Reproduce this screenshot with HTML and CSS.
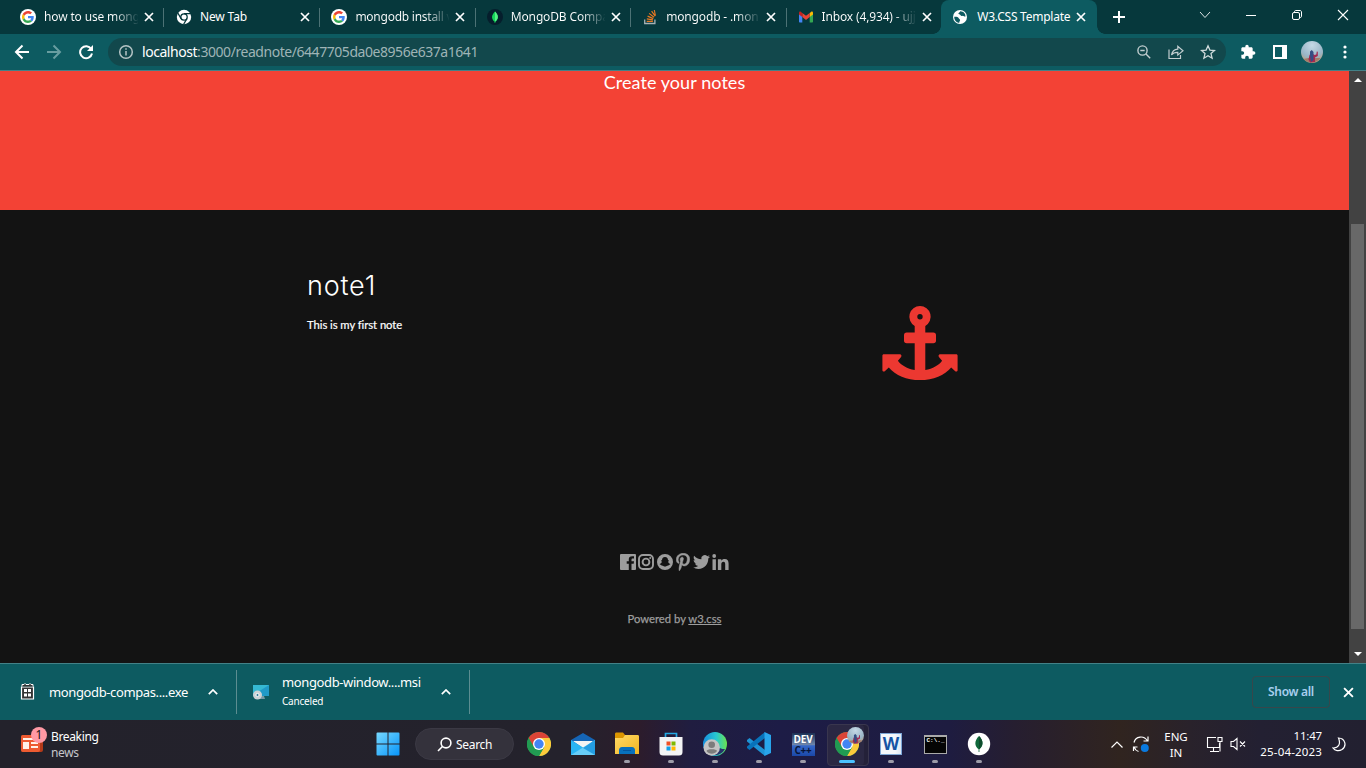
FILE: index.html
```html
<!DOCTYPE html>
<html lang="en">
<head>
<meta charset="utf-8">
<title>W3.CSS Template</title>
<link rel="stylesheet" href="styles.css">
</head>
<body>
<svg class="defs" width="0" height="0" aria-hidden="true">
  <defs>
    <symbol id="google" viewBox="0 0 48 48"><circle cx="24" cy="24" r="24" fill="#fff"/><g transform="translate(6 6) scale(.75)"><path fill="#EA4335" d="M24 9.5c3.54 0 6.71 1.22 9.21 3.6l6.85-6.85C35.9 2.38 30.47 0 24 0 14.62 0 6.51 5.38 2.56 13.22l7.98 6.19C12.43 13.72 17.74 9.5 24 9.5z"/><path fill="#4285F4" d="M46.98 24.55c0-1.57-.15-3.09-.38-4.55H24v9.02h12.94c-.58 2.96-2.26 5.48-4.78 7.18l7.73 6c4.51-4.18 7.09-10.36 7.09-17.65z"/><path fill="#FBBC05" d="M10.53 28.59c-.48-1.45-.76-2.99-.76-4.59s.27-3.14.76-4.59l-7.98-6.19C.92 16.46 0 20.12 0 24c0 3.88.92 7.54 2.56 10.78l7.97-6.19z"/><path fill="#34A853" d="M24 48c6.48 0 11.93-2.13 15.89-5.81l-7.73-6c-2.15 1.45-4.92 2.3-8.16 2.3-6.26 0-11.57-4.22-13.47-9.91l-7.98 6.19C6.51 42.62 14.62 48 24 48z"/></g></symbol>
    <symbol id="close" viewBox="0 0 10 10"><path d="M1 1l8 8M9 1L1 9" stroke="#fff" stroke-width="1.7"/></symbol>
    <symbol id="chrome" viewBox="0 0 24 24"><circle cx="12" cy="12" r="12" fill="#34a853"/><path d="M12 12L1.6 6A12 12 0 0 1 22.4 6z" fill="#db4437"/><path d="M12 6h10.4A12 12 0 0 1 12 24l5.2-9z" fill="#fdcb3b"/><path d="M1.6 6L6.8 15 12 12V6z" fill="#db4437"/><path d="M1.6 6A12 12 0 0 0 12 24l5.2-9-5.2 3-5.2-3z" fill="#219b52"/><circle cx="12" cy="12" r="6" fill="#fff"/><circle cx="12" cy="12" r="4.7" fill="#4285f4"/></symbol>
    <symbol id="up" viewBox="0 0 10 6"><path d="M.8 5.2L5 1l4.2 4.2" fill="none" stroke="#fff" stroke-width="1.7"/></symbol>
    <radialGradient id="sky" cx=".5" cy=".2" r=".9"><stop offset="0" stop-color="#c5d9e6"/><stop offset=".6" stop-color="#99b5c6"/><stop offset="1" stop-color="#c9985f"/></radialGradient>
    <symbol id="avatar" viewBox="0 0 22 22"><circle cx="11" cy="11" r="11" fill="url(#sky)"/><path d="M2.500 18l5-1h12a11 11 0 0 1-17 1z" fill="#a47b69"/><path d="M8.500 14l2-2 3 2 1.800-.500.500-3 1 .300v4.200l-2.800 1.500v4.500l-5 .500-1.500-3z" fill="#a52950"/><path d="M9 10.500l1.800-1.500 1.700 2v8l-2.500 2-1-6z" fill="#354e83"/></symbol>
    <linearGradient id="blue" x1="0" y1="0" x2="1" y2="1"><stop offset="0" stop-color="#77d9ff"/><stop offset="1" stop-color="#0794f9"/></linearGradient>
    <linearGradient id="gold" x1="0" y1="0" x2="1" y2="1"><stop offset="0" stop-color="#ffda67"/><stop offset="1" stop-color="#f3b520"/></linearGradient>
    <linearGradient id="edge" x1="0" y1="0" x2="1" y2="0"><stop offset="0" stop-color="#168ddd"/><stop offset=".55" stop-color="#28c8d2"/><stop offset="1" stop-color="#6ae34f"/></linearGradient>
  </defs>
</svg>

<header class="tabstrip">
  <div class="tab"><svg class="favicon"><use href="#google"/></svg><span class="tab-title fade">how to use mong</span><svg class="x"><use href="#close"/></svg></div>
  <div class="tab"><svg class="favicon" viewBox="0 0 16 16"><circle cx="8" cy="8" r="7.200" fill="#fff"/><circle cx="8" cy="8" r="3.200" fill="#fff" stroke="#06383c" stroke-width="1.300"/><path d="M8 4.700h7M5.100 9.700L1.800 4M10.900 9.700L7.500 15.500" stroke="#06383c" stroke-width="1.300"/></svg><span class="tab-title">New Tab</span><svg class="x"><use href="#close"/></svg></div>
  <div class="tab"><svg class="favicon"><use href="#google"/></svg><span class="tab-title fade wide">mongodb install v</span><svg class="x"><use href="#close"/></svg></div>
  <div class="tab"><svg class="favicon" viewBox="0 0 16 16"><circle cx="8" cy="8" r="8" fill="#061e2c"/><path d="M8 2.500c4 4 3.700 7.500.3 10.200V14h-.7v-1.300C4.300 10 4 6.500 8 2.500z" fill="#13d45a"/><path d="M8 2.500v10.200c3.500-2.700 4-6 0-10.200z" fill="#55ef83"/></svg><span class="tab-title fade">MongoDB Compa</span><svg class="x"><use href="#close"/></svg></div>
  <div class="tab"><svg class="favicon" viewBox="0 0 16 16" fill="none"><path d="M2.700 10.500v4h10.200v-4" stroke="#a5b1b5" stroke-width="1.300"/><path d="M4.700 12.300h6.200M4.800 9.900l6.100 1M5.600 7.100l5.700 2.500M7.100 4.400l4.900 3.900M9.600 2.200l3.600 5M12.300 1l1.100 5.500" stroke="#e87922" stroke-width="1.150"/></svg><span class="tab-title fade">mongodb - .mon</span><svg class="x"><use href="#close"/></svg></div>
  <div class="tab"><svg class="favicon" viewBox="0 0 16 16"><path d="M1 4v8.500c0 .6.400 1 1 1h2.300V7z" fill="#4285f4"/><path d="M15 4v8.500c0 .6-.4 1-1 1h-2.300V7z" fill="#34a853"/><path d="M11.700 4L13 2.900c.9-.7 2-.1 2 1v1.700l-3.300 2.500z" fill="#fbbc04"/><path d="M4.300 4L8 6.800 11.700 4v4.100L8 10.900 4.300 8.100z" fill="#ea4335"/><path d="M1 5.600V3.900c0-1.100 1.100-1.700 2-1L4.300 4v4.100z" fill="#c5221f"/></svg><span class="tab-title fade">Inbox (4,934) - ujj</span><svg class="x"><use href="#close"/></svg></div>
  <div class="tab active"><svg class="favicon" viewBox="0 0 16 16"><circle cx="8" cy="8" r="7" fill="#fff"/><path d="M2.300 7.700c1.800-.2 4 .2 4.400 1.500.4 1.100 1.700.8 1.400 2.100-.1.800-.9 1.200-.8 2.500C4.500 13.500 2 11 2.300 7.700zM8.200 2.200c-.2 1.100-1.700 1.200-1.800 2.300 0 1.100 1.500.6 2 1.500.3.800 1.100 1.100 2 .9 1.200-.3 1.600.8 2.900.8.800-2.600-1.800-5.600-5.100-5.500z" fill="#0d5b61"/></svg><span class="tab-title">W3.CSS Template</span><svg class="x"><use href="#close"/></svg></div>
  <svg class="newtab" viewBox="0 0 12 12"><path d="M6 0v12M0 6h12" stroke="#fff" stroke-width="2"/></svg>
  <div class="window-controls">
    <svg viewBox="0 0 12 12"><path d="M1 3l5 5.500L11 3" fill="none" stroke="#dce5e6"/></svg>
    <svg viewBox="0 0 12 12"><path d="M1 6.500h10" stroke="#fff"/></svg>
    <svg viewBox="0 0 12 12" fill="none" stroke="#fff"><rect x="1.500" y="3.500" width="7" height="7" rx="1.500"/><path d="M3.500 3.200V2.700c0-.7.500-1.200 1.200-1.200H9c.8 0 1.500.7 1.500 1.500v4.300c0 .7-.5 1.200-1.200 1.200h-.6"/></svg>
    <svg viewBox="0 0 12 12"><path d="M1 1l10 10M11 1L1 11" stroke="#fff" stroke-width="1.100"/></svg>
  </div>
</header>

<nav class="toolbar">
  <svg class="nav-icon" viewBox="0 0 16 16" fill="none" stroke="#fff" stroke-width="2"><path d="M15 8H2.500M8.500 1.500L2 8l6.500 6.500"/></svg>
  <svg class="nav-icon" viewBox="0 0 16 16" fill="none" stroke="#689da0" stroke-width="2"><path d="M1 8h12.500M7.500 1.500L14 8l-6.500 6.500"/></svg>
  <svg class="nav-icon" viewBox="0 0 16 16" fill="none" stroke="#fff" stroke-width="2"><path d="M13.200 5A6 6 0 1 0 14 9.500"/><path d="M15 1v6H9z" fill="#fff" stroke="none"/></svg>
  <div class="omnibox">
    <svg class="info" viewBox="0 0 16 16" fill="none" stroke="#b5c4c5" stroke-width="1.500"><circle cx="8" cy="8" r="6.300"/><path d="M8 7v4.500M8 4.200v1.600"/></svg>
    <span class="url"><b>localhost</b>:3000/readnote/6447705da0e8956e637a1641</span>
    <svg class="omni-icon" viewBox="0 0 16 16" fill="none" stroke="#c2ced0" stroke-width="1.400"><circle cx="6.500" cy="6.500" r="4.600"/><path d="M10 10l4.200 4.200M4.300 6.500h4.400"/></svg>
    <svg class="omni-icon" viewBox="0 0 16 16" fill="none" stroke="#c2ced0" stroke-width="1.200"><path d="M1 5.500v9h11.500V11M3.500 11c.7-4 3-5.700 6.300-5.900V2.300L15 6.800l-5.200 4.300V8.400C7 8.300 5 9 3.500 11z"/></svg>
    <svg class="omni-icon" viewBox="0 0 16 16" fill="none" stroke="#d0dbdc" stroke-width="1.300"><path d="M8 1.800l1.900 4.300 4.600.4L11 9.600l1.100 4.600L8 11.700l-4.100 2.500L5 9.600 1.500 6.500l4.600-.4z"/></svg>
  </div>
  <svg class="ext" viewBox="0 0 24 24"><path fill="#fff" d="M20.500 11H19V7c0-1.100-.9-2-2-2h-4V3.500C13 2.120 11.880 1 10.500 1S8 2.120 8 3.500V5H4c-1.100 0-1.990.9-1.990 2v3.800H3.500c1.490 0 2.700 1.210 2.700 2.700s-1.210 2.700-2.700 2.700H2V20c0 1.100.9 2 2 2h3.800v-1.500c0-1.490 1.210-2.700 2.700-2.700 1.490 0 2.700 1.210 2.700 2.700V22H17c1.100 0 2-.9 2-2v-4h1.500c1.380 0 2.500-1.120 2.500-2.500S21.880 11 20.500 11z"/></svg>
  <svg class="panel" viewBox="0 0 14 14"><path fill="#fff" fill-rule="evenodd" d="M0 0h14v14H0zM2 2v10h7V2z"/></svg>
  <svg class="avatar"><use href="#avatar"/></svg>
  <svg class="dots" viewBox="0 0 4 14" fill="#fff"><circle cx="2" cy="2" r="1.600"/><circle cx="2" cy="7" r="1.600"/><circle cx="2" cy="12" r="1.600"/></svg>
</nav>

<div class="viewport">
  <main class="page">
    <section class="hero"><p>Create your notes</p></section>
    <section class="note">
      <article>
        <h1>note1</h1>
        <p>This is my first note</p>
      </article>
      <svg class="anchor" viewBox="0 0 76 76"><path fill="#ec3831" fill-rule="evenodd" d="M38 1a10.700 10.700 0 0 1 5.300 20v6.500h8a2.700 2.700 0 0 1 2.700 2.700v5.400a2.700 2.700 0 0 1-2.700 2.700h-8V65c7.500-1.200 13.500-4.700 16.800-9.200l-3-3.500c-1.100-1.300-.5-3 1-3h16.100c.8 0 1.400.6 1.400 1.400v14.500c0 1.300-1.500 1.800-2.400 1l-4-3.800C62.500 70.200 51.500 75 38 75S13.500 70.200 6.800 62.400l-4 3.800c-.9.800-2.400.3-2.400-1V50.700c0-.8.6-1.400 1.400-1.400h16.100c1.500 0 2.100 1.700 1 3l-3 3.500C19.200 60.300 25.200 63.800 32.700 65V38.300h-8a2.700 2.700 0 0 1-2.700-2.700v-5.400a2.700 2.700 0 0 1 2.700-2.700h8V21A10.700 10.700 0 0 1 38 1zm0 8a2.700 2.700 0 1 0 0 5.400A2.700 2.700 0 0 0 38 9z"/></svg>
    </section>
    <footer class="footer">
      <div class="social">
        <svg width="16" height="18" viewBox="0 0 16 18"><path fill-rule="evenodd" d="M1 1h14a1 1 0 0 1 1 1v14a1 1 0 0 1-1 1h-3.500v-6.200h2.200l.3-2.500h-2.500V6.800c0-.8.300-1.200 1.300-1.200H14V3.300c-3.700-.6-5.200.6-5.200 3v2H6.700v2.500h2.100V17H1a1 1 0 0 1-1-1V2a1 1 0 0 1 1-1z"/></svg>
        <svg width="16" height="18" viewBox="0 0 16 18"><rect x="1" y="2" width="14" height="14" rx="4" fill="none" stroke="#9d9d9d" stroke-width="1.900"/><circle cx="8" cy="9" r="3.400" fill="none" stroke="#9d9d9d" stroke-width="1.900"/><circle cx="12.200" cy="4.900" r="1"/></svg>
        <svg width="16" height="18" viewBox="0 0 16 18"><path fill-rule="evenodd" d="M8 1a8 8 0 1 1 0 16A8 8 0 0 1 8 1zm0 3C5.800 4 5 5.300 5 7.300L3.900 7.500c.2.700 1 .8.900 1.400-.2.900-1.400 1.700-2.200 2 .3.700 1.500.6 1.900 1.600 1.500-.2 2 1.100 3.500 1.100s2-1.300 3.500-1.100c.4-1 1.600-.9 1.900-1.600-.8-.3-2-1.100-2.200-2-.1-.6.700-.7.900-1.400L11 7.300C11 5.300 10.200 4 8 4z"/></svg>
        <svg width="14" height="18" viewBox="0 0 384 512"><path stroke="#9d9d9d" stroke-width="14" d="M204 6.500C101.400 6.500 0 74.900 0 185.600 0 256 39.600 296 63.600 296c9.900 0 15.600-27.600 15.600-35.400 0-9.300-23.700-29.100-23.700-67.800 0-80.400 61.200-137.400 140.400-137.400 68.100 0 118.500 38.700 118.500 109.800 0 53.100-21.300 152.700-90.300 152.700-24.900 0-46.200-18-46.200-43.800 0-37.800 26.400-74.400 26.400-113.400 0-66.200-93.900-54.200-93.900 25.800 0 16.800 2.100 35.400 9.600 50.700-13.800 59.400-42 147.900-42 209.100 0 18.900 2.700 37.500 4.500 56.400 3.400 3.800 1.700 3.400 6.900 1.500 50.400-69 48.600-82.500 71.400-172.800 12.300 23.400 44.100 36 69.300 36 106.200 0 153.900-103.500 153.900-196.800C384 71.300 298.200 6.500 204 6.500z"/></svg>
        <svg width="17" height="18" viewBox="0 0 24 24"><path d="M23.953 4.570a10 10 0 01-2.825.775 4.958 4.958 0 002.163-2.723c-.951.555-2.005.959-3.127 1.184a4.920 4.920 0 00-8.384 4.482C7.690 8.095 4.067 6.130 1.640 3.162a4.822 4.822 0 00-.666 2.475c0 1.710.870 3.213 2.188 4.096a4.904 4.904 0 01-2.228-.616v.060a4.923 4.923 0 003.946 4.827 4.996 4.996 0 01-2.212.085 4.936 4.936 0 004.604 3.417 9.867 9.867 0 01-6.102 2.105c-.390 0-.779-.023-1.170-.067a13.995 13.995 0 007.557 2.209c9.053 0 13.998-7.496 13.998-13.985 0-.210 0-.420-.015-.630A9.935 9.935 0 0024 4.590z"/></svg>
        <svg width="17" height="18" viewBox="0 0 17 18"><circle cx="2.200" cy="3" r="1.900"/><path d="M.5 6.300h3.400V17H.5zM5.900 6.300h3.400v1.500c.7-1.200 1.800-1.800 3.400-1.800 2.800 0 3.900 1.900 3.900 4.800V17h-3.400v-5.700c0-1.600-.4-2.600-1.700-2.600-1.500 0-2.200 1.100-2.200 2.600V17H5.900z"/></svg>
      </div>
      <p>Powered by <a>w3.css</a></p>
    </footer>
  </main>
  <aside class="scrollbar">
    <svg viewBox="0 0 8 4"><path d="M0 4l4-4 4 4z" fill="#fff"/></svg>
    <div class="thumb"></div>
    <svg viewBox="0 0 8 4"><path d="M0 0l4 4 4-4z" fill="#fff"/></svg>
  </aside>
</div>

<section class="downloads">
  <div class="download first">
    <svg width="16" height="18" viewBox="0 0 16 18"><path d="M1.500 4h12v12h-12z" fill="#333" stroke="#fff" stroke-width="1.200"/><path d="M2 3.500V1.500h2l1-1 1 1h3l1-1 1 1h2v2" fill="#333" stroke="#fff" stroke-width="1"/><path d="M4 6h3v3H4zM8 6h3v3H8zM4 10.500h3v3H4zM8 10.500h3v3H8z" fill="#fff"/></svg>
    <div class="file"><span>mongodb-compas....exe</span></div>
    <svg class="chev"><use href="#up"/></svg>
  </div>
  <div class="download second">
    <svg width="16" height="16" viewBox="0 0 16 16"><path d="M0 1h16v11H0z" fill="#209ac7"/><path d="M0 1h16L0 11z" fill="#35b9d3"/><path d="M8 12h3l1 3H7z" fill="#789aa5"/><circle cx="4.500" cy="11" r="4.500" fill="#ccd2d5"/><circle cx="4.500" cy="11" r="1.600" fill="#347f99" stroke="#fff"/></svg>
    <div class="file"><span>mongodb-window....msi</span><small>Canceled</small></div>
    <svg class="chev"><use href="#up"/></svg>
  </div>
  <button class="show-all">Show all</button>
  <svg class="close-bar"><use href="#close"/></svg>
</section>

<footer class="taskbar">
  <div class="widget">
    <div class="news-icon"><svg width="22" height="17" viewBox="0 0 22 17"><rect width="22" height="17" rx="2" fill="#b43a19"/><rect width="19" height="17" rx="2" fill="#ed5b31"/><path d="M2 3h10v2H2zM2 7h6v7H2zM10 7h7v2h-7zM10 11h7v2h-7z" fill="#fff2e8"/></svg><i class="badge">1</i></div>
    <div class="news-text"><span>Breaking</span><span class="dim">news</span></div>
  </div>
  <div class="start"><svg width="24" height="24" viewBox="0 0 24 24"><path fill="url(#blue)" d="M1.500.500h10v11H.500v-10a1 1 0 0 1 1-1zM12.500.500h10a1 1 0 0 1 1 1v10h-11zM.500 12.500h11v11h-10a1 1 0 0 1-1-1zM12.500 12.500h11v10a1 1 0 0 1-1 1h-10z"/></svg></div>
  <div class="search"><svg width="15" height="15" viewBox="0 0 15 15" fill="none" stroke="#fff" stroke-width="1.600"><circle cx="9" cy="6" r="4.900"/><path d="M5.400 9.500L1 14"/></svg><span>Search</span></div>
  <div class="apps">
    <div class="app"><svg width="24" height="24"><use href="#chrome"/></svg></div>
    <div class="app"><svg width="24" height="24" viewBox="0 0 24 24"><path d="M0 8L12 1l12 7v4H0z" fill="#1565b5"/><path d="M2 9h20l-9 8z" fill="#f3f3f3"/><path d="M0 8l24 15H0z" fill="#29b5f4"/><path d="M24 8L0 23h24z" fill="#68cef8"/><path d="M24 8L12 16l12 7z" fill="#249de2"/></svg></div>
    <div class="app running"><svg width="24" height="24" viewBox="0 0 24 24"><path d="M0 2c0-1 .5-1.500 1.500-1.500H8l2 2.500v4H0z" fill="#dc9500"/><path d="M0 6h8l2-3h12.500c1 0 1.500.5 1.500 1.500V22H0z" fill="url(#gold)"/><path d="M4 22v-4c0-1.500 1-3 3-3h10c2 0 3 1.500 3 3v4z" fill="#0870bd"/><path d="M8 18.500h8" stroke="#04549d"/></svg></div>
    <div class="app running"><svg width="24" height="24" viewBox="0 0 24 24"><path d="M6.500 6V1.500h11V6" fill="none" stroke="#24a9e3" stroke-width="1.700"/><path d="M.5 5h23v15a3.500 3.500 0 0 1-3.500 3.500H4A3.500 3.500 0 0 1 .5 20z" fill="#f3f4f5"/><path d="M7.500 9.500h4v4h-4z" fill="#ef5126"/><path d="M12.500 9.500h4v4h-4z" fill="#7eb900"/><path d="M7.500 14.500h4v4h-4z" fill="#109fe8"/><path d="M12.500 14.500h4v4h-4z" fill="#ffb900"/></svg></div>
    <div class="app running"><svg width="24" height="24" viewBox="0 0 24 24"><circle cx="12" cy="12" r="12" fill="url(#edge)"/><path d="M8 12c8-1 5 5 14 5a12 12 0 0 1-12 6z" fill="#27346a"/><circle cx="8.700" cy="15.500" r="8.200" fill="#c4c4c4"/><circle cx="8.700" cy="12.800" r="3.300" fill="#7c7c7c"/><path d="M3.500 19c0-2.500 10.500-2.500 10.500 0-2.500 3.500-8 3.500-10.500 0z" fill="#7c7c7c"/></svg></div>
    <div class="app running"><svg width="24" height="24" viewBox="0 0 24 24"><path d="M0 8l2.500-2L18 18v6L0 9.500z" fill="#1e93d6"/><path d="M0 16l2.500 2L18 6V0L0 14.500z" fill="#0873bb"/><path d="M17.500 0L24 3v18l-6.500 3z" fill="#28a5ec"/></svg></div>
    <div class="app running"><div class="dev"><span>DEV</span><span class="cpp">C++</span></div></div>
    <div class="app running current"><svg width="24" height="24"><use href="#chrome"/></svg><svg class="profile"><use href="#avatar"/></svg></div>
    <div class="app running"><div class="word"><span>W</span></div></div>
    <div class="app running"><div class="cmd"><span>C:\._</span></div></div>
    <div class="app running"><svg width="24" height="24" viewBox="0 0 24 24"><circle cx="12" cy="12" r="11.200" fill="#fff"/><path d="M12 4c5 5 4.500 10 .4 13.200V20h-.8v-2.800C7.500 14 7 9 12 4z" fill="#10683b"/><path d="M12 4v13.200c4-3.200 5-8.200 0-13.200z" fill="#0e4d2d"/></svg></div>
  </div>
  <div class="tray">
    <svg width="12" height="7" viewBox="0 0 12 7"><path d="M.5 6.500L6 1l5.500 5.500" fill="none" stroke="#fff" stroke-width="1.200"/></svg>
    <svg class="sync" width="18" height="18" viewBox="0 0 18 18" fill="none" stroke="#fff" stroke-width="1.200"><path d="M2 7.500C3.500 1 12 0 15.500 6M16 1.500V6h-4.500M6.500 16.500c-2-.6-3.500-2-4.300-4.300M1.500 16v-4h4"/><circle cx="12.800" cy="13" r="4" fill="#0a7ae0" stroke="none"/></svg>
    <div class="lang"><span>ENG</span><span>IN</span></div>
    <svg class="net" width="17" height="17" viewBox="0 0 17 17" fill="none" stroke="#fff" stroke-width="1.100"><path d="M10 1.500H1.500v10H13.500V7M7.500 11.500v4M4 15.500h9M12 1.500h4v4h-4zM14 5.500v10"/></svg>
    <svg class="sound" width="16" height="14" viewBox="0 0 16 14" fill="none" stroke="#fff" stroke-width="1.100"><path d="M1 4.500h2.500L7 1.500v11L3.500 9.500H1zM10 4.500l5 5M15 4.500l-5 5"/></svg>
    <div class="clock"><span>11:47</span><span class="date">25-04-2023</span></div>
    <svg class="moon" width="14" height="15" viewBox="0 0 14 15"><path d="M6.500 1c7 .3 8.500 8 3.500 11.500-3 2-7 1.500-9-1.500 5.500.2 8-4 5.500-10z" fill="none" stroke="#fff" stroke-width="1.200"/></svg>
  </div>
</footer>
</body>
</html>
```
FILE: styles.css
```css
* { box-sizing: border-box; }
body {
  margin: 0;
  width: 1366px;
  height: 768px;
  display: flex;
  flex-direction: column;
  overflow: hidden;
  background: #131313;
  color: #fff;
  font: 12px "Noto Sans", "Open Sans", sans-serif;
}
svg { display: block; flex: none; }
.defs { position: absolute; }

/* Tabs */
.tabstrip { flex: none; height: 34px; display: flex; align-items: center; padding-left: 9px; background: #06383c; }
.tab { width: 155.4px; height: 34px; flex: none; display: flex; align-items: center; padding-left: 11px; position: relative; }
.tab:nth-child(-n+5)::after { content: ""; position: absolute; right: 0; top: 8px; width: 1px; height: 19px; background: #4c7275; }
.tab:nth-child(n+2):nth-child(-n+6) { left: .6px; }
.favicon { width: 16px; height: 16px; }
.tab-title { width: 94px; margin: 0 6px 0 8px; white-space: nowrap; letter-spacing: -.15px; line-height: 18px; }
.fade { background: linear-gradient(90deg, #fff 70px, #06383c 95px); -webkit-background-clip: text; background-clip: text; color: transparent; }
.wide { letter-spacing: -.25px; }
.x { width: 10px; height: 10px; }
.active { background: #0d5b61; border-radius: 8px 8px 0 0; }
.active .tab-title { letter-spacing: -.25px; margin: 0 5px 0 9px; }
.active::before { content: ""; position: absolute; left: -8px; right: -8px; bottom: 0; height: 8px; background: radial-gradient(circle at 0 0, transparent 7.5px, #0d5b61 8px) left / 8px 8px no-repeat, radial-gradient(circle at 100% 0, transparent 7.5px, #0d5b61 8px) right / 8px 8px no-repeat; }
.newtab { width: 12px; height: 12px; margin-left: 16px; }
.window-controls { display: flex; align-items: center; gap: 34px; margin: -5px 17px 0 auto; }
.window-controls svg { width: 12px; height: 12px; }

/* Address bar */
.toolbar { flex: none; height: 37px; display: flex; align-items: center; padding: 0 0 1px 14px; background: #0d5b61; border-bottom: 1px solid #438187; }
.nav-icon { width: 16px; height: 16px; margin-right: 16px; }
.omnibox { width: 1118px; height: 28px; margin-left: -2px; border-radius: 14px; display: flex; align-items: center; padding: 0 10px; background: #12484c; }
.info { width: 16px; height: 16px; }
.url { margin: 0 auto 0 8px; color: #9fb4b6; font-size: 14px; letter-spacing: -.45px; line-height: 20px; }
.url b { font-weight: 400; color: #fff; }
.omni-icon { width: 16px; height: 16px; margin-left: 16px; }
.ext { width: 16px; height: 16px; margin-left: 14px; }
.panel { width: 14px; height: 14px; margin-left: 17px; }
.avatar { width: 22px; height: 22px; margin-left: 14px; }
.dots { width: 4px; height: 14px; margin-left: 20px; }

/* Web page */
.viewport { flex: none; height: 592px; display: flex; }
.page { width: 1349px; display: flex; flex-direction: column; font-family: Lato, sans-serif; }
.hero { height: 139px; background: #f34235; text-align: center; }
.hero p { margin: 0; font-size: 18px; line-height: 22px; letter-spacing: .07px; }
.note { height: 317px; display: flex; padding: 51px 391px 0 307px; justify-content: space-between; }
.note h1 { margin: 0; font: 300 27px/48px Inter, sans-serif; letter-spacing: .8px; padding-top: 1px; }
.note p { margin: 6px 0 0; font-size: 11.250px; line-height: 17px; letter-spacing: -.05px; -webkit-text-stroke: .2px #fff; }
.anchor { width: 76px; height: 76px; margin-top: 44px; }
.footer { display: flex; flex-direction: column; align-items: center; color: #9d9d9d; padding-top: 26px; }
.social { display: flex; gap: 2.700px; fill: #9d9d9d; }
.footer p { margin: 39px 0 0; font-size: 11.250px; line-height: 17px; -webkit-text-stroke: .25px #9d9d9d; }
.footer a { text-decoration: underline; }
.scrollbar { width: 17px; background: #424242; display: flex; flex-direction: column; align-items: center; padding: 7px 0; }
.scrollbar svg { width: 8px; height: 4px; }
.thumb { width: 13px; height: 405px; margin: 142px 0 auto; background: #686868; }

/* Downloads */
.downloads { flex: none; height: 57px; display: flex; align-items: center; background: #0d5b61; border-top: 1px solid #438187; }
.download { height: 44px; display: flex; align-items: center; border-right: 1px solid #5c8d91; }
.first { width: 237px; padding-left: 20px; }
.second { width: 233px; padding-left: 16px; }
.file { display: flex; flex-direction: column; width: 139px; margin: -1px 20px 0 13px; font-size: 13px; line-height: 20px; white-space: nowrap; letter-spacing: -.38px; }
.first .file { margin-top: 0; }
.file small { font-size: 10px; line-height: 19px; letter-spacing: -.2px; }
.chev { width: 10px; height: 6px; }
.show-all { width: 78px; height: 32px; margin-left: auto; padding: 0 0 2px; border: 1px solid #37474b; border-radius: 4px; background: none; color: #a8cfef; font: 600 12px "Noto Sans", sans-serif; letter-spacing: -.3px; }
.close-bar { width: 11px; height: 11px; margin: 0 12px 0 13px; }

/* Taskbar */
.taskbar { flex: none; height: 48px; display: flex; align-items: center; background: linear-gradient(90deg, #23222b 0, #24222c 570px, #2c1c2c 640px, #201d40 690px, #1d1c46 780px, #1e1c40 950px, #261e30 1015px, #30241f 1120px, #29222b 1190px, #232032 1260px, #222030 1366px); }
.widget { width: 366px; display: flex; padding-left: 21px; }
.news-icon { width: 30px; position: relative; padding-top: 7px; height: 30px; }
.badge { position: absolute; left: 10px; top: -1px; width: 16px; height: 16px; border-radius: 50%; background: #ff99a4; color: #151515; font-style: normal; line-height: 16px; text-align: center; }
.news-text { display: flex; flex-direction: column; line-height: 16px; letter-spacing: -.35px; padding-top: 1px; }
.dim { color: #c5c5c9; }
.start { width: 44px; display: grid; place-items: center; }
.search { width: 99px; height: 32px; margin: 0 3px 0 5px; padding-left: 21px; border: 1px solid #3b3944; border-radius: 16px; background: #34323c; display: flex; align-items: center; gap: 4px; letter-spacing: -.3px; }
.apps { display: flex; }
.app { width: 44px; height: 48px; display: grid; place-items: center; position: relative; }
.running::after { content: ""; position: absolute; bottom: 5px; left: 19px; width: 6px; height: 3px; border-radius: 2px; background: #9d9ca8; }
.current::before { content: ""; position: absolute; left: 2px; top: 4px; width: 40px; height: 40px; border: 1px solid #39364e; border-radius: 4px; background: #2b2843; box-shadow: inset -4px 0 0 #242139; }
.current svg { position: relative; }
.current .profile { position: absolute; width: 17px; height: 17px; left: 22px; top: 7px; }
.current::after { left: 14px; width: 16px; background: #4bc2ff; }
.dev { width: 23px; height: 23px; display: flex; flex-direction: column; align-items: center; background: linear-gradient(#1c3054, #6d84aa 50%, #3567c9 56%, #1b48a8); font: 700 10px/12px "Open Sans", sans-serif; letter-spacing: -.2px; }
.cpp { color: #071436; line-height: 11px; }
.word { width: 22px; height: 22px; background: linear-gradient(90deg, #f5f8fc 70%, #dce8f5); border: 1px solid #7da6d6; display: grid; place-items: center; color: #1554a5; font: 700 17px/18px "Open Sans", sans-serif; }
.cmd { width: 23px; height: 19px; background: #050505; border: 1px solid #aaa; border-top-width: 2px; padding-left: 2px; font: 700 6px/8px "Liberation Mono", monospace; }
.tray { display: flex; align-items: center; margin-left: auto; padding-right: 20px; }
.sync { margin-left: 9px; }
.lang { width: 26px; margin-left: 13px; display: flex; flex-direction: column; align-items: center; line-height: 16px; font-size: 11.500px; padding-top: 1px; }
.net { margin-left: 17px; }
.sound { margin-left: 7px; }
.clock { width: 63px; margin-left: 13px; display: flex; flex-direction: column; align-items: flex-end; font-size: 11.500px; line-height: 16px; letter-spacing: -.2px; white-space: nowrap; }
.date { letter-spacing: .17px; }
.moon { margin-left: 10px; }
```
